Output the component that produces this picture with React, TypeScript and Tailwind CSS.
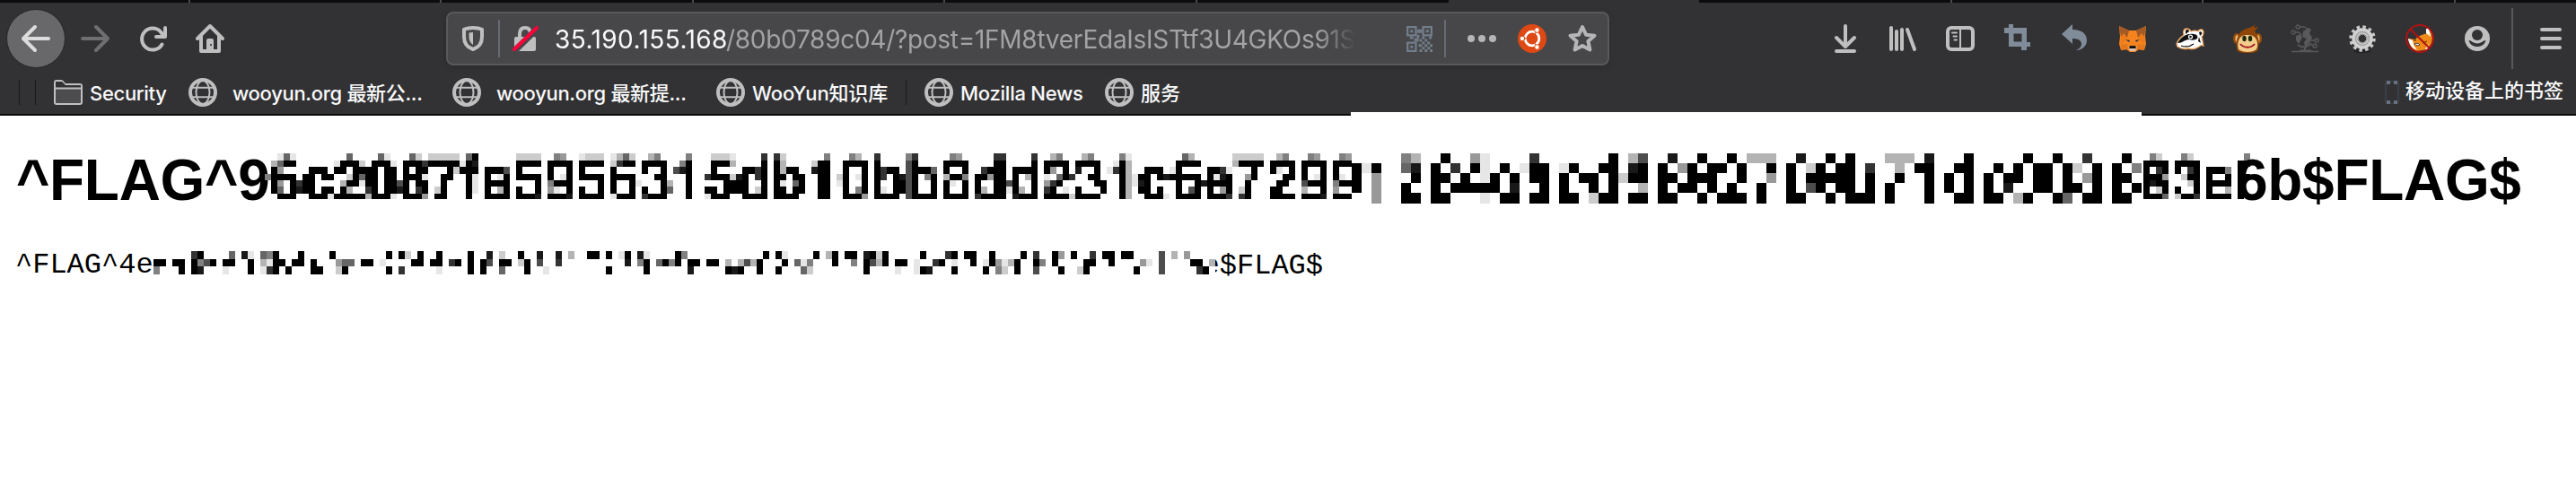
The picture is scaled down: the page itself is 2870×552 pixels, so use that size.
import React from "react";

/* ---------- mosaic data: "column[-column]:shade", shade 1-9, # is solid ---------- */

const WIDE_ROWS = [
  "2:1 3:6 4:1 13:6 18:6 19:1 23:6 24:2 26-30:2 32:6 33:# 40-43:2 46:5 47:4 50:1 51-53:2 55:1 56:3 57:6 58:2 61:3 62:5 67:5 71-73:2 74:1 79:8 81:8 82:2 89:5 93:5 94:3 97:8 102:5 103:8 109:5 110:4 116-117:8 122:8 125:3 126:5 130:3 131:5 136:5 137:1 146:6 147:3 154-158:2 161:3 162:5 166:5 167:4 171:5 172:4 300:5 301:2 305:5 306:2 315:5",
  "1:3 2:6 3-4:# 11:1 12-14:# 15:2 17-19:# 20:1 22-24:# 25:8 26-30:# 31:1 32:# 33:9 40-43:# 45-48:# 50-53:# 55:2 56:8 57-58:# 60-63:# 66:5 67:# 71-73:# 74:3 79:# 81:# 82:3 87:2 88-89:# 92-95:# 97:# 102:7 103:# 108-111:# 116-117:# 122:# 124-127:# 129-132:# 135:1 136:# 137:3 145-148:# 154:3 155-158:# 160-163:# 165-168:# 170-172:# 299-302:# 304-307:# 314-315:#",
  "1:# 2:4 7-9:# 11-12:# 14-17:# 19-20:# 22:# 24-25:# 29:# 30:2 31-33:# 35-37:# 38:7 40:# 45:# 48:# 50:# 55:# 60:# 63:# 65:7 66:9 67:# 71:# 76-77:# 78:8 79:# 81:# 82:3 83-84:# 87:9 88-89:# 92:# 95:# 97:# 98:8 99-100:# 102:7 103-105:# 106:6 108:# 111:# 114:8 115-117:# 119-122:# 124:# 125:4 127:# 129:9 132:# 134:1 135:8 136:# 137:3 140-142:# 144:1 145:# 150-151:# 152:8 153:1 157:# 160:# 161:1 163:# 165:# 168:# 170:# 299:# 301:8 302:# 304:# 306:8 307:# 309-311:# 312:5 314:#",
  "0:5 1-4:# 6-7:# 9-10:# 13:2 14:# 15:6 16-17:# 19-20:# 22-24:# 25:1 28-29:# 32:# 33:1 35:# 37:1 38:# 40-43:# 45:# 47:1 48:# 50-53:# 55-58:# 62-63:# 67:# 70:8 71-73:# 74:2 75:9 76:# 78:8 79:# 81-82:# 84-85:# 88-89:# 91:2 92:# 94:1 95:# 97:# 98:8 100:# 101:9 102:7 103:# 105:5 106:# 108:3 109-110:# 111:5 113-114:# 115:4 116-117:# 119:# 121:3 122:# 124:1 126:6 127:# 128:8 131-132:# 136:# 137:3 138:1 139-140:# 142:# 143:9 144-148:# 150:# 151:1 152:9 153:# 156:4 157:# 162-163:# 165:# 167:1 168:# 170:# 171:1 299-301:# 302:4 305:2 306-307:# 309:# 312:# 314-315:#",
  "1:# 2:4 4:# 5:8 6-7:# 12:3 13-14:# 15:1 16-17:# 19-20:# 21:7 22:# 24-25:# 28:# 32:# 33:1 35-38:# 43:# 45:5 46-48:# 53:# 55:# 58:# 59:1 63:# 64:3 67:# 73-76:# 79:# 81:# 82:1 84:6 85:# 88-89:# 91:1 92:# 95:# 97:# 100-101:# 102:7 103:# 106:# 108:# 109:1 111:# 113:# 116-117:# 118:7 119:# 122:# 124:4 125:8 126:# 132-133:# 136:# 137:3 138:1 139:9 140:# 145:# 148:# 149:9 150-153:# 156:# 161-162:# 165:7 166-168:# 170:5 171-172:# 299:# 300:9 301-302:# 306:2 307:# 309-312:# 314:#",
  "1:# 2:6 4:# 5:9 6-7:# 9-10:# 12:# 13:3 16:8 17:# 19-20:# 21:9 22:# 24:8 25:# 27:2 28:# 32:# 33:1 35:# 37:3 38:# 40:# 43:# 45:4 46:1 48:# 50:# 53:# 55:# 58:# 60:# 63:# 64:6 67:# 70-71:# 73-76:# 78:2 79:# 81-82:# 84-85:# 88-89:# 92:# 94:5 95:# 97:# 98:1 100-101:# 102:7 103:# 106:# 108:# 111:# 113:# 114:3 116-117:# 118:1 119:# 120:3 122:# 124:8 125:# 127:1 129:# 133:# 136:# 137:3 139-140:# 142:# 145:# 147:7 148:# 150:# 152:4 153:# 155:2 156:# 160-161:# 165:3 168:# 170:4 299:# 301:2 302:# 304:# 307:# 309:# 312:3 314:#",
  "2-4:# 7-9:# 10:1 11-15:# 16:3 17-19:# 20:1 22-24:# 25:4 27-28:# 32:# 35-38:# 40-42:# 43:9 45-47:# 48:9 50-53:# 55:1 56-58:# 60:8 61-63:# 67:# 70:1 71-73:# 76-79:# 81-84:# 88-89:# 92-94:# 95:4 97-100:# 102:7 103-106:# 108-111:# 113:8 114-117:# 119:9 120-122:# 124-127:# 128:2 129-132:# 136:# 137:3 140-142:# 143:1 145-148:# 150-152:# 153:8 155:8 156:# 160-163:# 165-167:# 168:9 170-172:# 299-301:# 302:6 304:2 305-306:# 307:8 309-312:# 314:#",
];

const COARSE_ROWS = [
  "5:5 6:3 9:# 12:4 13:1 18:8 26:# 28:3 29:7 32:9 35:# 38:# 40-42:3 45:9 48:# 50:# 54-56:3 58:9 62:# 68:# 71:# 74:8 78:#",
  "0:# 1:1 2:# 5:6 6:9 8:# 10:8 12:# 13:1 15:# 17:1 18-19:# 21:1 22:# 25-26:# 28:9 29:# 31:# 33:4 34:# 36-37:# 39:# 42:# 44:# 46:2 47:# 49-50:# 52:8 55:3 57-58:# 61-62:# 65:# 67:# 69-70:# 72:# 73:2 75:# 77:# 79:5",
  "0:# 2:4 6:# 8-9:# 11:# 13:1 14:# 16:# 18-19:# 21:# 23-24:# 26:# 27:2 28-29:# 31:# 32:# 34-36:# 39:# 42:4 44:# 46-50:# 52:# 55:# 58:# 60:# 62:# 64:# 66-67:# 69-70:# 72:# 74:4 75:# 77-78:#",
  "0:# 2:4 5:# 8:# 10-14:# 16:9 19:# 21:# 24:# 26:# 29:3 31:# 33-34:# 36:# 38:# 41:# 44:# 46:7 47:# 49-50:# 52:# 54:# 58:# 60:# 62:# 64:# 66:9 69-70:# 72-73:# 75:# 77:# 79:#",
  "2:4 5-6:# 8-9:# 13:1 15-16:# 18-19:# 21-22:# 24:2 25-26:# 28-29:# 31-32:# 35:# 37-39:# 41:# 44-45:# 48:# 50-52:# 54:# 58:# 61-62:# 64-65:# 67:3 68:# 71:# 72:6 74-75:# 77-78:#",
];

const SMALL_ROWS = [
  "6:8 7:# 12:6 14:9 15:1 17:6 18:5 19:# 23:# 28:# 37:# 39:# 40:2 42:# 45:# 50:# 53:9 55:2 58:# 61:9 64:9 66:3 69-70:# 72:# 74:1 75:# 77:9 78:1 83:# 84:5 97:# 99:# 100:1 105:# 107:3 108:# 110-111:# 113:9 114:# 115:2 116:# 122:# 126:8 127:# 129-130:# 133:# 138:# 140:8 143:# 144:4 146:# 149:8 151-152:# 154-155:# 160:7 162:3 164:4",
  "0-1:# 3-4:# 6:# 7:5 8:7 9:# 11-12:# 15:# 17:3 18:1 19-20:# 22-23:# 25:# 29:4 30-31:6 33-34:# 36:1 41-42:# 44-45:# 47:8 48:# 50:# 52:# 53:7 55-56:# 58:2 59:# 61:7 64:8 75:9 77:5 78:# 80:6 81:# 82:5 83:# 85-86:# 88-89:# 91:3 93:3 94:7 95:3 96:# 100:# 102:6 103:1 104:5 108:# 111:5 113:# 114:7 115:3 116:# 118-119:# 121:1 124:8 125:# 127:1 130:# 132:1 133:# 134:4 135:1 136:3 137:# 140:# 141:5 143:# 148-149:# 152:# 157:4 158:1 160:7 165-166:# 168:3",
  "0:5 4:# 6:# 7:9 11:1 15:# 17:1 18:8 19:# 21:# 25-26:# 29:2 30:# 37:# 39:8 45:1 50:# 52:# 55:6 59:# 62:1 72:# 78:# 85:9 91:# 92:9 93:# 96:# 99:# 103:6 104:2 113:# 118:1 121:1 122:# 123:9 127:# 132:# 134:5 135:2 137:# 140:7 144:# 147:2 148:# 156:# 160:7 166:8 167:#",
];

function Cells({ rows, x0, size, edges }: { rows: string[]; x0: number; size: number; edges: number[] }) {
  return (
    <g shapeRendering="crispEdges">
      {rows.flatMap((row, r) =>
        row.split(" ").map((run) => {
          const [span, shade] = run.split(":");
          const [from, to = from] = span.split("-").map(Number);
          const level = shade === "#" ? 0 : Math.round(255 * (1 - Number(shade) / 10));
          return (
            <rect
              key={`${r}-${span}`}
              x={x0 + from * size}
              y={edges[r]}
              width={(to - from + 1) * size}
              height={edges[r + 1] - edges[r]}
              fill={`rgb(${level},${level},${level})`}
            />
          );
        }),
      )}
    </g>
  );
}

/* ---------- icons ---------- */

const Icon = ({ children, s = 32 }: { children: React.ReactNode; s?: number }) => (
  <svg width={s} height={s} viewBox="0 0 32 32" fill="none" stroke="#bfbfc0" strokeWidth="4" strokeLinecap="round" strokeLinejoin="round" className="shrink-0 overflow-visible">
    {children}
  </svg>
);

const Globe = () => (
  <Icon>
    <circle cx="16" cy="16" r="14" />
    <ellipse cx="16" cy="16" rx="7.5" ry="13" strokeWidth="2" />
    <path d="M4 10.8h24M4 21.2h24" strokeWidth="2" />
  </Icon>
);

const Folder = () => (
  <Icon>
    <path d="M1 27V5q0-2 2-2h5q1.500 0 2.500 1.500L12.500 7H29q2 0 2 2v18q0 2-2 2H3q-2 0-2-2z" fill="#4c4c4e" strokeWidth="2" />
    <path d="M2 4h7l4 4h17v3H2z" fill="#323234" stroke="none" />
    <path d="M1 11.500h30" strokeWidth="2" />
  </Icon>
);

const Qr = () => (
  <svg width="29" height="29" viewBox="0 0 15 15" fill="#727d8a" className="shrink-0">
    <path fillRule="evenodd" d="M0 0h6v6H0zM1.200 1.200v3.600h3.600V1.200zM9 0h6v6H9zM10.200 1.200v3.600h3.600V1.200zM0 9h6v6H0zM1.200 10.200v3.600h3.600v-3.600z" />
    <path d="M2.200 2.200h1.600v1.600H2.200zM11.200 2.200h1.600v1.600h-1.600zM2.200 11.200h1.600v1.600H2.200zM6 2h3v2H6zM2 6h2v1.500H2zM4.500 7H7v2H4.500zM6 5h1.500v2H6zM9 6h1.500v1.500H9zM7.500 7.500H9V9H7.500zM10.500 7.500H12V9h-1.500zM13 6h1.500v1.500H13zM9 9h1.500v1.500H9zM12 9h1.500v1.500H12zM7 10.500h2V12H7zM10.500 10.500H12V12h-1.500zM13.500 10.500H15V12h-1.500zM9 12h1.500v1.500H9zM12 12h1.500v1.500H12zM7.500 13.500H9V15H7.500zM10.500 13.500H12V15h-1.500zM13.500 13.500H15V15h-1.500z" />
  </svg>
);

const Ubuntu = () => (
  <Icon>
    <circle cx="16" cy="16" r="16" fill="#dd4814" stroke="none" />
    <circle cx="16" cy="16" r="7.800" stroke="#fff" strokeWidth="2.800" strokeLinecap="butt" strokeDasharray="15.200 1.140" strokeDashoffset="7.600" />
    <g fill="#fff" stroke="#dd4814" strokeWidth="1">
      <circle cx="5" cy="16" r="2.800" />
      <circle cx="21.500" cy="6.500" r="2.800" />
      <circle cx="21.500" cy="25.500" r="2.800" />
    </g>
  </Icon>
);

const Sidebar = () => (
  <Icon>
    <rect x="2" y="4" width="28" height="24" rx="4" />
    <path d="M16 4v24" strokeWidth="2" strokeLinecap="butt" />
    <path d="M7 9.500h5M8.500 13.500h3.500M9.500 17.500h2.500" strokeWidth="2" />
  </Icon>
);

const Crop = () => (
  <svg width="30" height="30" viewBox="0 0 30 30" className="shrink-0 overflow-visible" fill="#808c9a">
    <path fillRule="evenodd" d="M5 0h5v4h15v16h4v5h-4v4h-6v-4H5V10H0V4h5zM10.500 10.500v9h9v-9z" />
  </svg>
);

const Undo = () => (
  <svg width="30" height="30" viewBox="0 0 30 30" className="shrink-0 overflow-visible" fill="#808c9a">
    <path d="M0 11L12 0v6c11 0 16 5 16 12 0 6-5 11-12 11 4-2 6-4 6-7 0-4-4-6-10-6v6z" />
  </svg>
);

const MetaMask = () => (
  <svg width="32" height="32" viewBox="0 0 32 32" className="shrink-0">
    <path d="M1 2l11 5h8l11-5-1 12 1 8-2 7-6-1-4 3h-6l-4-3-6 1-2-7 1-8z" fill="#f5841f" />
    <path d="M1 2l11 5-2 8-7-1zM31 2L20 7l2 8 7-1z" fill="#a35a24" />
    <path d="M3 14l3-4 4 5-7 8zM29 14l-3-4-4 5 7 8z" fill="#ee7a18" />
    <path d="M8 17l5 1-1 2zM24 17l-5 1 1 2z" fill="#233447" />
    <path d="M11 25l2 5h6l2-5-2 1h-6z" fill="#d7c1b3" />
    <path d="M13 24h6l1 3h-8z" fill="#161616" />
    <path d="M3 23l7-1 1 6-8 1zM29 23l-7-1-1 6 8 1z" fill="#e4761b" />
  </svg>
);

const Badger = () => (
  <svg width="32" height="32" viewBox="0 0 32 32" className="shrink-0">
    <path d="M1 22c1-4 4-7 8-10-1-4 0-7 3-7s4 1 5 3c3-1 6-1 8 0 1-3 6-3 6 1 0 3-1 4-2 5 1 3 1 6 2 10-3-1-4 0-5 1-4 3-8 3-12 2-4 1-9 0-12-2z" fill="#fff" stroke="#e8a460" strokeWidth="1.300" />
    <path d="M2 21c4-6 9-11 18-10 4 0 5 3 4 5-3 2-6 2-9 1-5 0-7 4-13 4z" fill="#111" />
    <path d="M11 7c2-2 4-1 4 1l-4 3zM26 9c2-2 4 0 3 2l-2 2zM26 14l2 7-3-2z" fill="#111" />
    <circle cx="16.500" cy="14" r="2.600" fill="#fff" />
    <circle cx="16.500" cy="14" r="1.300" fill="#111" />
    <path d="M6 24c6 2 10 1 14-2" stroke="#111" fill="none" strokeWidth="1.200" />
  </svg>
);

const Monkey = () => (
  <svg width="32" height="32" viewBox="0 0 32 32" className="shrink-0">
    <ellipse cx="4" cy="16" rx="4" ry="6" fill="#9a4e0a" />
    <ellipse cx="28" cy="16" rx="4" ry="6" fill="#9a4e0a" />
    <ellipse cx="4.500" cy="16" rx="2" ry="3.800" fill="#eec27c" />
    <ellipse cx="27.500" cy="16" rx="2" ry="3.800" fill="#eec27c" />
    <path d="M5 30C2 22 4 14 8 9 13 4 20 5 25 0l-2 4 5-1-4 5c5 5 6 15 3 22-5 3-17 3-22 0z" fill="#8f4508" />
    <path d="M6 28c-2-6 0-16 8-16h4c8 0 11 10 8 16-4 4-16 4-20 0z" fill="#f3cd8c" />
    <ellipse cx="12.500" cy="16" rx="2.200" ry="3.200" fill="#1d2a0c" />
    <ellipse cx="19" cy="16" rx="2.200" ry="3.200" fill="#1d2a0c" />
    <path d="M8 22c4 5 12 5 16 0" stroke="#a3141c" strokeWidth="2" fill="none" />
  </svg>
);

const DimGlobe = () => (
  <svg width="32" height="32" viewBox="0 0 32 32" className="shrink-0" fill="none" stroke="#59595c" strokeWidth="1.300">
    <circle cx="3" cy="9" r="2" />
    <circle cx="8" cy="3" r="2" />
    <circle cx="29" cy="18" r="2" />
    <circle cx="27" cy="24" r="2" />
    <path d="M5 9h4l3 3M10 3h5l5 3M27 18h-5M25 24l-4-2M1 30.500h30" />
    <path d="M14 8l6-4 3 2-2 4 3 5-3 6-5 4-1-5 3-4-5-2zM6 13l5-2 2 4-4 7-3-4z" fill="#59595c" stroke="none" />
    <path d="M8 23c5 4 11 3 15-2M16 25v4M10 29.500h13" strokeWidth="2" />
  </svg>
);

const Gear = () => (
  <svg width="32" height="32" viewBox="0 0 32 32" className="shrink-0">
    <ellipse cx="16" cy="30" rx="10" ry="2" fill="#222224" />
    <circle cx="16" cy="16" r="12.500" fill="none" stroke="#c9c9c9" strokeWidth="4.500" strokeDasharray="3.300 3.245" />
    <circle cx="16" cy="16" r="8" fill="none" stroke="#d0d0d0" strokeWidth="7.500" />
    <circle cx="16" cy="16" r="7.500" fill="none" stroke="#a2a2a2" strokeWidth="1.500" />
    <circle cx="16" cy="16" r="5" fill="none" stroke="#888" strokeWidth="1" />
  </svg>
);

const BlockedFox = () => (
  <svg width="32" height="32" viewBox="0 0 32 32" className="shrink-0 overflow-visible">
    <path d="M3 16l8 1c4-5 8-5 13-7l2-5c3 3 5 10 3 16l-4 7-12 2c-6-2-9-7-10-14z" fill="#ef8a17" />
    <path d="M3 16l5 2 1 5 4 6c-6-2-9-7-10-13zM23 5l3 0 2 9-5-4zM22 28l4-7-2 8z" fill="#fff" />
    <path d="M10 22c2-1 5-1 6 1-2 1-4 1-6-1z" fill="#fff" stroke="#222" strokeWidth=".8" />
    <path d="M19 21l5-2M9 18l3 0" stroke="#55300a" />
    <circle cx="16" cy="16" r="15" fill="none" stroke="#b01212" strokeWidth="2" />
    <path d="M5.500 5.500l21 21" stroke="#b01212" strokeWidth="2" />
  </svg>
);

const Account = () => (
  <svg width="32" height="32" viewBox="0 0 32 32" className="shrink-0">
    <circle cx="16" cy="16" r="14" fill="#bfbfc0" />
    <circle cx="16" cy="12" r="6" fill="#323234" />
    <path d="M6.500 18q2.500 0 4 1.800 5.500 3.500 11 0 1.500-1.800 4-1.800c-1 4.500-5 7-9.500 7s-8.500-2.500-9.500-7z" fill="#323234" />
  </svg>
);

const TOOLS: React.ReactNode[] = [
  <Icon><path d="M16 2v22M6 15l10 10 10-10M6 30h20" /></Icon>,
  <Icon><path d="M3 4v24M9 8v20M15 6v22M21 6l8 22" /></Icon>,
  <Sidebar />,
  <Crop />,
  <Undo />,
  <MetaMask />,
  <Badger />,
  <Monkey />,
  <DimGlobe />,
  <Gear />,
  <BlockedFox />,
  <Account />,
];

/* ---------- page ---------- */

function TabStrip() {
  return (
    <div className="flex h-[3px] w-full bg-[#0c0c0d]">
      <div className="ml-[210px] w-[2px] bg-[#4a4a4c]" />
      <div className="ml-[278px] w-[2px] bg-[#4a4a4c]" />
      <div className="ml-[279px] w-[2px] bg-[#4a4a4c]" />
      <div className="ml-[278px] w-[2px] bg-[#4a4a4c]" />
      <div className="ml-[279px] w-[2px] bg-[#4a4a4c]" />
      <div className="ml-[280px] w-[279px] bg-[#323234]" />
      <div className="ml-[280px] w-[2px] bg-[#4a4a4c]" />
      <div className="ml-[278px] w-[2px] bg-[#4a4a4c]" />
      <div className="ml-[279px] w-[2px] bg-[#4a4a4c]" />
    </div>
  );
}

function UrlBar() {
  return (
    <div className="ml-[247px] flex h-[60px] w-[1296px] shrink-0 items-center rounded-lg border-2 border-[#59595b] bg-[#474749] shadow-[0_2px_6px_rgba(0,0,0,0.15)]">
      <div className="ml-[12px]">
        <Icon>
          <path d="M16 4q6 0 10 1.800V14c0 7-4 12-10 14C10 26 6 21 6 14V5.800Q10 4 16 4z" />
          <path d="M11.500 9.500q2.500-.5 4.500-.5v14c-3-2-4.500-5-4.500-9z" fill="#bfbfc0" stroke="none" />
        </Icon>
      </div>
      <div className="ml-[12px] h-[42px] w-[2px] bg-[#656a74]" />
      <div className="ml-[12px]">
        <Icon>
          <path d="M10 15v-4q0-7 6-7t6 7v4" strokeLinecap="butt" />
          <rect x="4" y="14" width="24" height="16" rx="2" fill="#bfbfc0" stroke="none" />
          <path d="M4 30L30 4.500" stroke="#474749" strokeWidth="7" />
          <path d="M4 28L29 4" stroke="#ff0039" />
        </Icon>
      </div>
      <div className="ml-[17px] flex w-[892px] overflow-hidden pt-[2px] text-[28px] leading-[40px] whitespace-nowrap [mask-image:linear-gradient(to_right,#000_850px,transparent_892px)]">
        <span className="w-[191px] shrink-0 tracking-[0.42px] text-[#f9f9fa]">35.190.155.168</span>
        <span className="shrink-0 tracking-[-0.28px] text-[#a3a3a5]">/80b0789c04/?post=1FM8tverEdaIsISTtf3U4GKOs91S</span>
      </div>
      <div className="ml-[57px]"><Qr /></div>
      <div className="ml-[13px] h-[42px] w-[2px] bg-[#656a74]" />
      <div className="ml-[24px] flex gap-[4px]">
        <div className="size-[8px] rounded-full bg-[#b5b5b7]" />
        <div className="size-[8px] rounded-full bg-[#b5b5b7]" />
        <div className="size-[8px] rounded-full bg-[#b5b5b7]" />
      </div>
      <div className="ml-[24px]"><Ubuntu /></div>
      <div className="ml-[24px]">
        <Icon>
          <path d="M16 3l4 8.700 9.500 1-7.100 6.300 2 9.500L16 24l-8.400 4.500 2-9.500-7.100-6.300 9.500-1z" stroke="#b5b5b7" />
        </Icon>
      </div>
    </div>
  );
}

function Toolbar() {
  return (
    <div className="flex h-[80px] items-center">
      <div className="ml-[7px] flex size-[66px] shrink-0 items-center justify-center rounded-full border border-[#262628] bg-[#68686a]">
        <Icon><path d="M30 16H2M15 3L2 16l13 13" stroke="#dcdcdd" /></Icon>
      </div>
      <div className="ml-[17px]"><Icon><path d="M2 16h28M17 3l13 13-13 13" stroke="#6f6f71" /></Icon></div>
      <div className="ml-[33px]">
        <Icon><path d="M25.500 22.500A12 12 0 1 1 24 8.500l4 5.500M29 4v10H19" /></Icon>
      </div>
      <div className="ml-[31px]">
        <Icon>
          <path d="M2 16L16 2l14 14" />
          <path d="M6 14v16h20V14" />
          <path fillRule="evenodd" d="M12 30V18q0-2 2-2h4q2 0 2 2v12zM17 22a1 1 0 1 0 .01 0z" fill="#bfbfc0" stroke="none" />
        </Icon>
      </div>
      <UrlBar />
      <div className="ml-[231px] flex">
        {TOOLS.map((tool, i) => (
          <div key={i} className="flex w-16 justify-center">{tool}</div>
        ))}
      </div>
      <div className="ml-[6px] h-[68px] w-[2px] bg-[#59595b]" />
      <div className="ml-[26px]"><Icon><path d="M6 6h20M6 16h20M6 26h20" /></Icon></div>
    </div>
  );
}

function Bookmark({ icon, label, className }: { icon: React.ReactNode; label: string; className: string }) {
  return (
    <div className={`flex shrink-0 items-center whitespace-nowrap ${className}`}>
      {icon}
      <span className="pt-[2px]">{label}</span>
    </div>
  );
}

function BookmarksBar() {
  return (
    <div className="flex h-[40px] items-center text-[22px] leading-[32px] font-medium text-[#f9f9fa]">
      <div className="ml-[21px] h-[28px] w-px bg-[#1a1a1b]" />
      <div className="ml-[17px] h-[28px] w-px bg-[#1a1a1b]" />
      <Bookmark icon={<Folder />} label="Security" className="ml-[20px] w-[150px] gap-[8px] tracking-[-0.3px]" />
      <Bookmark icon={<Globe />} label="wooyun.org 最新公..." className="w-[294px] gap-[17px] tracking-[-0.3px]" />
      <Bookmark icon={<Globe />} label="wooyun.org 最新提..." className="w-[294px] gap-[17px] tracking-[-0.3px]" />
      <Bookmark icon={<Globe />} label="WooYun知识库" className="w-[211px] gap-[8px] tracking-[-0.15px]" />
      <div className="h-[28px] w-px bg-[#1a1a1b]" />
      <Bookmark icon={<Globe />} label="Mozilla News" className="ml-[20px] w-[201px] gap-[8px] tracking-[-0.25px]" />
      <Bookmark icon={<Globe />} label="服务" className="gap-[8px]" />
      <div className="mr-[14px] ml-auto flex items-center gap-[7px]">
        <svg width="16" height="28" viewBox="0 0 16 28" fill="none">
          <rect x="1" y="2" width="14" height="24" rx="2" stroke="#3a3e46" strokeWidth="2" />
          <path d="M2 3h4M10 3h4M2 25h4M10 25h4" stroke="#69717e" strokeWidth="4" />
        </svg>
        <span className="-mt-[4px] whitespace-nowrap">移动设备上的书签</span>
      </div>
    </div>
  );
}

export default function App() {
  return (
    <div className="h-[552px] w-[2870px] overflow-hidden bg-white font-['Inter','Noto_Sans_CJK_SC',sans-serif]">
      <header className="relative h-[129px] border-b-2 border-[#0c0c0d] bg-[#323234]">
        <TabStrip />
        <Toolbar />
        <BookmarksBar />
        <div className="absolute top-[125px] left-[1505px] h-[4px] w-[881px] bg-white" />
      </header>
      <main className="px-4 text-black">
        <div className="flex h-[125px] pt-[36px] font-['Liberation_Sans',sans-serif] text-[64px] leading-[72px] font-bold">
          <span className="w-[286px] shrink-0 pl-[2px] tracking-[-0.3px]">^FLAG^9</span>
          <svg width="2189" height="72" viewBox="302 165 2189 72" className="shrink-0 overflow-visible">
            <Cells rows={WIDE_ROWS} x0={295} size={7} edges={[171, 179, 186, 194, 201, 208, 216, 222]} />
            <Cells rows={COARSE_ROWS} x0={1506} size={11} edges={[171, 182, 193, 204, 215, 227]} />
          </svg>
          <span className="shrink-0 tracking-[-0.3px]">6b$FLAG$</span>
        </div>
        <div className="flex pt-[22px] font-['Courier','Liberation_Mono',monospace] text-[32px] leading-[40px]">
          <span className="w-[155px] shrink-0 pl-[1px]">^FLAG^4e</span>
          <svg width="1183" height="40" viewBox="171 276 1183 40" className="shrink-0">
            <Cells rows={SMALL_ROWS} x0={171} size={7} edges={[280, 289, 297, 306]} />
          </svg>
          <div className="flex w-[120px] shrink-0 justify-end overflow-hidden pt-px">
            <span>e$FLAG$</span>
          </div>
        </div>
      </main>
    </div>
  );
}
